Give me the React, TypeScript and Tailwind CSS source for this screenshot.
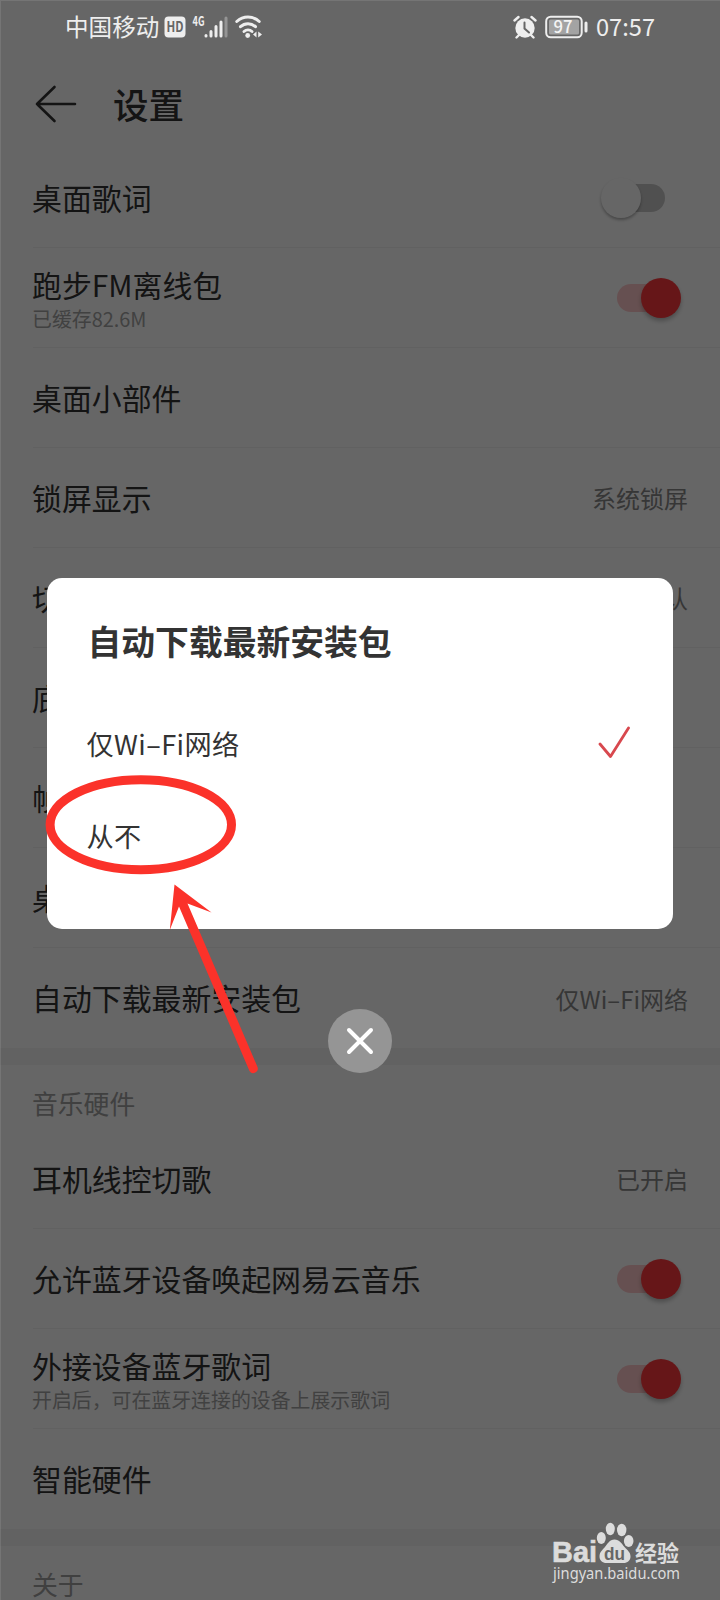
import React, { useState } from 'react';

interface SettingItem {
  label: string;
  hint?: string;
  value?: string;
  toggle?: boolean;
}

const generalItems: SettingItem[] = [
  { label: '桌面歌词', toggle: false },
  { label: '跑步FM离线包', hint: '已缓存82.6M', toggle: true },
  { label: '桌面小部件' },
  { label: '锁屏显示', value: '系统锁屏' },
  { label: '切', value: '默认' },
  { label: '底' },
  { label: '帧' },
  { label: '桌' },
  { label: '自动下载最新安装包', value: '仅Wi–Fi网络' },
];

const hardwareItems: SettingItem[] = [
  { label: '耳机线控切歌', value: '已开启' },
  { label: '允许蓝牙设备唤起网易云音乐', toggle: true },
  { label: '外接设备蓝牙歌词', hint: '开启后，可在蓝牙连接的设备上展示歌词', toggle: true },
  { label: '智能硬件' },
];

const downloadOptions = ['仅Wi–Fi网络', '从不'];

const StatusBar: React.FC = () => (
  <div className="relative z-10 flex h-[54px] items-center pl-[65px] pr-[64px] text-[#eeeeee]">
    <span className="text-[23.6px] leading-none">中国移动</span>
    <svg className="ml-[5px]" width="22" height="22" viewBox="0 0 22 22">
      <rect x="0.5" y="0.5" width="21" height="21" rx="4" fill="#eeeeee" />
      <text x="2.5" y="16.2" textLength="17" lengthAdjust="spacingAndGlyphs" fontSize="14" fontWeight="700" fill="#666666">HD</text>
    </svg>
    <svg className="ml-[6px] overflow-visible" width="38" height="24" viewBox="0 0 38 24">
      <text x="0.5" y="10.5" textLength="12" lengthAdjust="spacingAndGlyphs" fontSize="13" fontWeight="700" fill="#eeeeee">4G</text>
      <g stroke="#eeeeee" strokeWidth="3" strokeLinecap="round">
        <path d="M14 20.5v0.5M19 16.5v4.5M24 11.5v9.5M29 7v14" />
        <path d="M34 3v18" stroke="#949494" />
      </g>
    </svg>
    <svg className="ml-[5px]" width="28" height="24" viewBox="0 0 28 24">
      <g fill="none" stroke="#eeeeee" strokeWidth="3" strokeLinecap="round">
        <path d="M1.8 6.5a16.5 16.5 0 0 1 22.4 0" />
        <path d="M5.5 11.7a11 11 0 0 1 15 0" />
        <path d="M9 16.5a6 6 0 0 1 8 0" />
      </g>
      <circle cx="12.7" cy="20.5" r="2.4" fill="#eeeeee" />
      <path d="M21.5 16.5v6l-3.5-3zM23.2 16.5v6l3.8-3z" fill="#eeeeee" />
    </svg>
    <svg className="ml-auto" width="24" height="24" viewBox="0 0 24 24">
      <circle cx="12" cy="13" r="9.7" fill="#eeeeee" />
      <path d="M1.5 5.5l4-3.5M22.5 5.5l-4-3.5M3.5 22.5l3-3M20.5 22.5l-3-3" stroke="#eeeeee" strokeWidth="2.4" strokeLinecap="round" />
      <path d="M11.5 7.5v6l4.5 4" fill="none" stroke="#666666" strokeWidth="2" strokeLinecap="round" />
    </svg>
    <svg className="ml-[8px] overflow-visible" width="44" height="24" viewBox="0 0 44 24">
      <rect x="1.2" y="1.7" width="35.5" height="20.6" rx="4.5" fill="none" stroke="#eeeeee" strokeWidth="2" />
      <rect x="4" y="4.5" width="30" height="15" rx="1.5" fill="#a3a3a3" />
      <path d="M41 8v8" stroke="#eeeeee" strokeWidth="3" strokeLinecap="round" />
      <text x="8.5" y="18" textLength="19" lengthAdjust="spacingAndGlyphs" fontSize="17" fontWeight="500" fill="#f4f4f4">97</text>
    </svg>
    <svg className="ml-[7px] overflow-visible" width="60" height="28" viewBox="0 0 60 28">
      <text x="0" y="22.5" textLength="59" lengthAdjust="spacingAndGlyphs" fontSize="24" fill="#eeeeee">07:57</text>
    </svg>
  </div>
);

const Toggle: React.FC<{ on: boolean }> = ({ on }) => (
  <span className="relative mr-[7px] flex h-10 w-20 items-center justify-center">
    <span className={on ? 'h-7 w-12 rounded-full bg-[#ffc8ca]' : 'h-7 w-12 rounded-full bg-[#c8c8c8]'} />
    <span
      className={
        on
          ? 'absolute right-0 top-0 size-10 rounded-full bg-[#ff383c] shadow-[0_3px_4px_rgba(0,0,0,0.25)]'
          : 'absolute left-0 top-0 size-10 rounded-full bg-white shadow-[0_2px_3px_rgba(0,0,0,0.3)]'
      }
    />
  </span>
);

const SettingRow: React.FC<{ item: SettingItem; last: boolean }> = ({ item, last }) => (
  <div className={last ? 'flex h-[100px] items-center pr-8' : 'flex h-[100px] items-center border-b border-[#f2f2f2] pr-8'}>
    <div className={item.hint ? 'flex-1 pt-[2px]' : 'flex-1 pb-[2px]'}>
      <p className="-ml-px text-[29.9px] leading-[36px] text-[#333333]">{item.label}</p>
      {item.hint && <p className="-ml-px pt-[3px] text-[19.9px] leading-[27px] text-[#a4a4a4]">{item.hint}</p>}
    </div>
    {item.value && <span className="pt-px text-[24px] text-[#888888]">{item.value}</span>}
    {item.toggle !== undefined && <Toggle on={item.toggle} />}
  </div>
);

const SettingList: React.FC<{ items: SettingItem[] }> = ({ items }) => (
  <div className="pl-[33px]">
    {items.map((item, index) => (
      <SettingRow key={index} item={item} last={index === items.length - 1} />
    ))}
  </div>
);

const Watermark: React.FC = () => (
  <svg className="absolute bottom-0 right-0" width="180" height="90" viewBox="540 1510 180 90">
    <g fill="#dcdcdc">
      <text x="552" y="1562" textLength="45" lengthAdjust="spacingAndGlyphs" fontSize="29" fontWeight="700" stroke="#dcdcdc" strokeWidth="0.6" fontFamily="Liberation Sans">Bai</text>
      <ellipse cx="601.3" cy="1538" rx="4.5" ry="6" />
      <ellipse cx="610.3" cy="1529" rx="4.5" ry="6.2" />
      <ellipse cx="621.7" cy="1530" rx="4.7" ry="6.2" />
      <ellipse cx="628.7" cy="1541" rx="4.8" ry="6" />
      <path d="M614.5 1539.5c5 0 7 4 10 7.5s6 5 6 9.5c0 4-3 6.500-7 6.500h-17c-4 0-7-2.500-7-6.500 0-4.500 3-6.500 5.500-9.500s4.500-7.500 9.500-7.500z" />
      <text x="635" y="1561" textLength="44" lengthAdjust="spacingAndGlyphs" fontSize="22" fontWeight="700">经验</text>
      <text x="553" y="1579" textLength="127" lengthAdjust="spacingAndGlyphs" fontSize="15.5" fontFamily="Noto Sans">jingyan.baidu.com</text>
    </g>
    <text x="604" y="1560" textLength="21" lengthAdjust="spacingAndGlyphs" fontSize="19" fontWeight="700" fill="#666666" fontFamily="Liberation Sans">du</text>
  </svg>
);

// Red ellipse and arrow pointing at the option to pick
const Annotation: React.FC = () => (
  <svg className="pointer-events-none absolute left-0 top-[760px]" width="300" height="320" viewBox="0 760 300 320">
    <ellipse cx="140.8" cy="824.7" rx="90.7" ry="45" fill="none" stroke="#fb322a" strokeWidth="9" />
    <path d="M174.500 884.500L211.500 912.500L187.500 903.500L257.500 1067a4.500 4.500 0 0 1-8 4L179 906.500L169.800 930z" fill="#fb322a" />
  </svg>
);

const App: React.FC = () => {
  const [selected, setSelected] = useState(0);
  const [open, setOpen] = useState(true);

  return (
    <div className="relative h-[1600px] w-[720px] overflow-hidden bg-white font-['Noto_Sans_CJK_SC',sans-serif]">
      <StatusBar />
      <header className="flex h-[94px] items-center pl-[35px] pt-[6px]">
        <svg width="43" height="40" viewBox="0 0 43 40">
          <path d="M40 20H2M19.5 3L2 20l17.5 17" fill="none" stroke="#333333" strokeWidth="2.6" strokeLinecap="round" strokeLinejoin="round" />
        </svg>
        <h1 className="ml-[35px] text-[35.5px] font-medium leading-none text-[#333333]">设置</h1>
      </header>

      <SettingList items={generalItems} />
      <div className="h-[17px] bg-[#f5f5f5]" />
      <p className="h-[64px] pl-[32px] pt-[18px] text-[25.8px] leading-[40px] text-[#a0a0a0]">音乐硬件</p>
      <SettingList items={hardwareItems} />
      <div className="h-[17px] bg-[#f5f5f5]" />
      <p className="h-[64px] pl-[32px] pt-[18px] text-[25.8px] leading-[40px] text-[#a0a0a0]">关于</p>

      {/* Dialog */}
      {open && (
        <div className="absolute inset-0 flex flex-col items-center border-l border-t border-white/10 bg-black/60 pr-[2px] pt-[577px]">
          <div className="h-[351px] w-[626px] rounded-[15px] bg-white pl-[40px] pr-[43px] pt-[36px] text-[#333333]">
            <h2 className="pl-px text-[33.8px] font-bold leading-[54px]">自动下载最新安装包</h2>
            <ul className="mt-[29px]">
              {downloadOptions.map((option, index) => (
                <li key={option} className="flex h-[92px] items-center justify-between" onClick={() => setSelected(index)}>
                  <span className="text-[27.2px] tracking-[0.4px]">{option}</span>
                  {selected === index && (
                    <svg width="32" height="34" viewBox="0 0 32 34">
                      <path d="M2 18L12.5 30.5L30.5 2" fill="none" stroke="#d8484e" strokeWidth="2.8" strokeLinecap="round" strokeLinejoin="round" />
                    </svg>
                  )}
                </li>
              ))}
            </ul>
          </div>
          <button className="mt-[80px] flex size-16 items-center justify-center rounded-full bg-[#959595]" onClick={() => setOpen(false)}>
            <svg width="28" height="28" viewBox="0 0 28 28">
              <path d="M3 3l22 22M25 3L3 25" stroke="#ffffff" strokeWidth="4" strokeLinecap="round" />
            </svg>
          </button>
        </div>
      )}

      <Annotation />
      <Watermark />
    </div>
  );
};

export default App;
